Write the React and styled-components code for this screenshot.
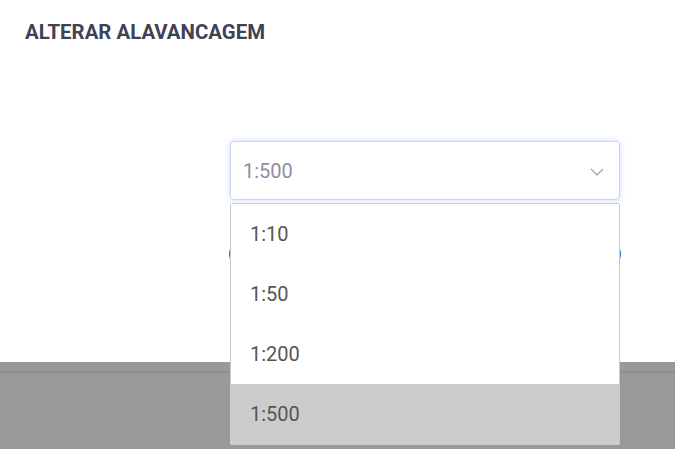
import React from 'react'
import styled, { createGlobalStyle } from 'styled-components';

const options = ["1:10", "1:50", "1:200", "1:500"];

export default function App() {
  const [value, setValue] = React.useState("1:500");
  const [open, setOpen] = React.useState(true);

  return (
    <>
      <GlobalStyle />
      <Modal>
        <Header>
          <Title>ALTERAR ALAVANCAGEM</Title>
        </Header>
        <Body>
          <Field>
            <SelectBox onClick={() => setOpen(!open)}>
              <Placeholder>{value}</Placeholder>
              <Chevron width="14" height="8" viewBox="0 0 14 8">
                <path d="M1 1 L7 7 L13 1" fill="none" stroke="#9a9aa6" strokeWidth="1.1" />
              </Chevron>
            </SelectBox>
            {open && (
              <Menu>
                {options.map(opt => (
                  <Option
                    key={opt}
                    $selected={opt === value}
                    onClick={() => { setValue(opt); setOpen(false); }}
                  >
                    {opt}
                  </Option>
                ))}
              </Menu>
            )}
            <ConfirmButton />
          </Field>
        </Body>
        <Footer>
          <FooterLine />
        </Footer>
      </Modal>
    </>
  );
}

const GlobalStyle = createGlobalStyle`
  html, body {
    margin: 0;
    padding: 0;
    background: #ffffff;
    font-family: Roboto, "Liberation Sans", sans-serif;
  }
`;

const Modal = styled.div`
  width: 675px;
  height: 449px;
  display: flex;
  flex-direction: column;
  overflow: hidden;
`;

const Header = styled.div`
  height: 62px;
  padding: 21px 25px 0;
  box-sizing: border-box;
`;

const Title = styled.h2`
  margin: 0;
  font-size: 20.4px;
  line-height: 22px;
  font-weight: 700;
  color: #3f4254;
`;

const Body = styled.div`
  height: 300px;
  padding-top: 79px;
  box-sizing: border-box;
  display: flex;
  justify-content: flex-end;
  padding-right: 55px;
`;

const Field = styled.div`
  position: relative;
  width: 390px;
  display: flex;
  flex-direction: column;
`;

const SelectBox = styled.div`
  height: 59px;
  box-sizing: border-box;
  border: 1px solid #c9d5ea;
  border-radius: 4px;
  box-shadow: 0 0 6px rgba(110, 160, 255, 0.35);
  background: #fff;
  display: flex;
  align-items: center;
  justify-content: space-between;
  padding: 0 15px 0 12px;
  cursor: pointer;
  position: relative;
  z-index: 2;
`;

const Placeholder = styled.span`
  font-size: 20px;
  color: #8e8ea6;
`;

const Chevron = styled.svg`
  display: block;
  margin-top: 2px;
`;

const Menu = styled.div`
  position: absolute;
  top: 62px;
  left: 0;
  width: 390px;
  box-sizing: border-box;
  background: #fff;
  border: 1px solid #cacad6;
  border-radius: 2px;
  overflow: hidden;
  z-index: 3;
`;

const Option = styled.div`
  height: 60px;
  display: flex;
  align-items: center;
  padding-left: 19px;
  font-size: 20px;
  color: #555555;
  background: ${p => (p.$selected ? '#cccccc' : '#ffffff')};
  cursor: pointer;
`;

const ConfirmButton = styled.button`
  margin: 45px 0 0 -1px;
  width: 392px;
  height: 18px;
  border: none;
  border-radius: 8px;
  background: #2f6fe6;
`;

const Footer = styled.div`
  flex: 1;
  background: #999999;
  padding-top: 9px;
`;

const FooterLine = styled.div`
  border-top: 2px solid #8f8f8f;
`;
